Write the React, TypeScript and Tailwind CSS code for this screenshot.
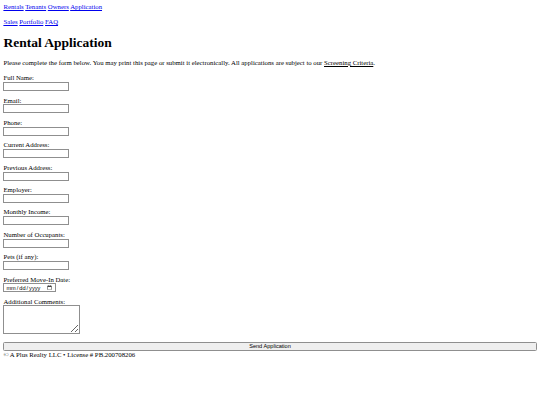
import React from 'react';

const fields = [
  'Full Name:',
  'Email:',
  'Phone:',
  'Current Address:',
  'Previous Address:',
  'Employer:',
  'Monthly Income:',
  'Number of Occupants:',
  'Pets (if any):',
];

export default function App() {
  return (
    <div className="min-h-screen bg-white px-[3.4px] pt-[3.3px] text-[6.75px] leading-[7.8px] text-black [font-family:'Liberation_Serif',serif]">
      <nav>
        <a href="#" className="text-[#0000ee] underline">Rentals</a>{' '}
        <a href="#" className="text-[#0000ee] underline">Tenants</a>{' '}
        <a href="#" className="text-[#0000ee] underline">Owners</a>{' '}
        <a href="#" className="text-[#0000ee] underline">Application</a>
      </nav>
      <div className="mt-[6.9px]">
        <a href="#" className="text-[#0000ee] underline">Sales</a>{' '}
        <a href="#" className="text-[#0000ee] underline">Portfolio</a>{' '}
        <a href="#" className="text-[#0000ee] underline">FAQ</a>
      </div>

      <h1 className="mt-[9.2px] text-[13.5px] font-bold leading-[15.6px]">Rental Application</h1>

      <p className="mt-[8.4px]">
        Please complete the form below. You may print this page or submit it electronically. All applications are
        subject to our <a href="#" className="underline">Screening Criteria</a>.
      </p>

      <form className="mt-[7.4px] flex flex-col gap-[5.6px]">
        {fields.map((f) => (
          <div key={f} className="flex flex-col">
            <label>{f}</label>
            <input type="text" className="h-[9px] w-[66px] border border-[#8f8f8f] bg-white" />
          </div>
        ))}
        <div className="flex flex-col">
          <label>Preferred Move-In Date:</label>
          <input
            type="date"
            className="h-[8.6px] w-[53px] border border-[#8f8f8f] bg-white px-[1px] text-[5.6px] leading-[6px] [font-family:'Liberation_Sans',sans-serif]"
          />
        </div>
        <div className="flex flex-col">
          <label>Additional Comments:</label>
          <textarea className="h-[28.4px] w-[77px] resize border border-[#8f8f8f] bg-white" />
        </div>
        <button
          type="button"
          className="mt-[2.4px] h-[8.8px] w-full rounded-[1.5px] border border-[#8f8f8f] bg-[#efefef] text-[5.6px] leading-[6px] [font-family:'Liberation_Sans',sans-serif]"
        >
          Send Application
        </button>
      </form>
      <footer>© A Plus Realty LLC • License # PB.200708206</footer>
    </div>
  );
}
